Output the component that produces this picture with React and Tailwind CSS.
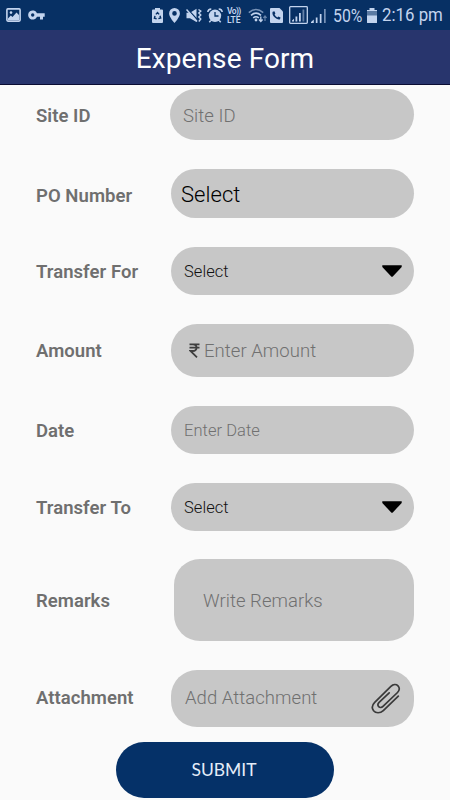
import React from 'react';

const PictureIcon = () => (
  <svg className="w-[15px] h-[14px] shrink-0" viewBox="0 0 15 14" fill="none">
    <rect x="0.9" y="0.9" width="13.2" height="12.2" rx="1" stroke="currentColor" strokeWidth="1.6" />
    <circle cx="5" cy="4.6" r="1.3" fill="currentColor" />
    <path d="M2 10.5L4.8 7.5L6.5 9L10.5 4.5L13 7V12H2Z" fill="currentColor" />
  </svg>
);

const KeyIcon = () => (
  <svg className="w-[17px] h-[10px] shrink-0" viewBox="0 0 17 10">
    <path
      fill="currentColor"
      fillRule="evenodd"
      d="M9 3.3A4.6 4.6 0 1 0 9 6.7H12V9.5H15V6.7H16.7V3.3ZM4.7 3.3A1.7 1.7 0 1 1 4.7 6.7A1.7 1.7 0 0 1 4.7 3.3Z"
    />
  </svg>
);

const BatterySaverIcon = () => (
  <svg className="w-[11px] h-[15px] shrink-0" viewBox="0 0 11 15">
    <path fill="currentColor" d="M3 0H8V1.5H10Q11 1.5 11 2.5V14Q11 15 10 15H1Q0 15 0 14V2.5Q0 1.5 1 1.5H3Z" />
    <path
      d="M3.9 6.4L5.5 4.5L7.1 6.4M8 7.8L8.7 10L6.4 10.7M4.6 10.7L2.4 10.2L3 7.8"
      fill="none"
      stroke="#073064"
      strokeWidth="1.4"
    />
  </svg>
);

const PinIcon = () => (
  <svg className="w-[11px] h-[15px] shrink-0" viewBox="0 0 11 15">
    <path
      fill="currentColor"
      fillRule="evenodd"
      d="M5.5 0A5.4 5.4 0 0 0 0.1 5.4C0.1 9 5.5 15 5.5 15S10.9 9 10.9 5.4A5.4 5.4 0 0 0 5.5 0ZM5.5 3.1A2.3 2.3 0 1 1 5.5 7.7A2.3 2.3 0 0 1 5.5 3.1Z"
    />
  </svg>
);

const VibrateIcon = () => (
  <svg className="w-4 h-[15px] shrink-0" viewBox="0 0 16 15">
    <path fill="currentColor" d="M0.5 4.8H4L10.5 0.8V14L4 10.2H0.5Z" />
    <path d="M1.5 1L12 12.5" stroke="#073064" strokeWidth="1.4" />
    <path d="M0.5 1.5L11 13.5" stroke="currentColor" strokeWidth="1.5" />
    <path d="M12.5 1.5L14.8 3L12.8 5L14.8 7L12.8 9L14.8 11L12.8 13.5" fill="none" stroke="currentColor" strokeWidth="1.4" />
  </svg>
);

const AlarmIcon = () => (
  <svg className="w-4 h-[15px] shrink-0" viewBox="0 0 16 15">
    <circle cx="8" cy="7.8" r="6.2" fill="currentColor" />
    <path
      d="M0.8 4Q1 1 4.3 0.9M15.2 4Q15 1 11.7 0.9M3.8 12.5L2.3 14.3M12.2 12.5L13.7 14.3"
      fill="none"
      stroke="currentColor"
      strokeWidth="1.5"
    />
    <path d="M8 4V8H11.5" fill="none" stroke="#073064" strokeWidth="1.3" />
  </svg>
);

const WifiIcon = () => (
  <svg className="w-5 h-[15px] shrink-0" viewBox="0 0 20 15" fill="none">
    <path d="M0.8 4.6Q8 -1.6 15.2 4.6" stroke="currentColor" strokeWidth="1.5" opacity="0.6" />
    <path d="M3 7.3Q8 3 13 7.3M5.2 9.8Q8 7.6 10.8 9.8" stroke="currentColor" strokeWidth="1.6" />
    <circle cx="8" cy="12" r="1.4" fill="currentColor" />
    <path d="M12.8 8.5V13M11 11.5L12.8 13.5L14.6 11.5" stroke="currentColor" strokeWidth="1.3" />
    <path d="M17 13V8.3M15.4 9.8L17 8L18.6 9.8" stroke="currentColor" strokeWidth="1.2" opacity="0.5" />
  </svg>
);

const CallIcon = () => (
  <svg className="w-[13px] h-[15px] shrink-0" viewBox="0 0 13 15">
    <path fill="currentColor" d="M1 0H9.5L13 3.5V14Q13 15 12 15H1Q0 15 0 14V1Q0 0 1 0Z" />
    <path
      fill="#073064"
      d="M2.7 3.8L4.4 3.3L5.4 5.6L4.6 6.5Q5.4 8.5 7.4 9.4L8.3 8.5L10.5 9.6L10 11.3Q8.8 12 6.6 10.8Q2.6 8.4 2.4 5Z"
    />
  </svg>
);

const SimOneIcon = () => (
  <svg className="w-[19px] h-[18px] shrink-0" viewBox="0 0 19 18">
    <rect x="0.7" y="0.7" width="17.6" height="16.6" rx="0.8" fill="none" stroke="currentColor" strokeWidth="1.3" />
    <path fill="currentColor" d="M3 15.5V14.5L5 12.8V15.5ZM6.5 10.5H8.3V15.5H6.5ZM10 7H11.8V15.5H10Z" />
    <path fill="currentColor" opacity="0.5" d="M13.5 3.5H15.3V15.5H13.5Z" />
  </svg>
);

const SimTwoIcon = () => (
  <svg className="w-4 h-[15px] shrink-0" viewBox="0 0 16 15">
    <path fill="currentColor" d="M0 14L2.8 11.5V15H0ZM4.8 9.5H6.5V15H4.8ZM8.8 6H10.5V15H8.8Z" />
    <path fill="currentColor" opacity="0.6" d="M13 1H14.7V15H13Z" />
  </svg>
);

const BatteryIcon = () => (
  <svg className="w-[10px] h-[15px] shrink-0" viewBox="0 0 10 15">
    <path fill="currentColor" opacity="0.45" d="M0 2H10V8H0Z" />
    <path fill="currentColor" d="M2.5 0H7.5V2H10V3H0V2H2.5ZM0 7.5H10V14.5Q10 15 9.5 15H0.5Q0 15 0 14.5Z" />
  </svg>
);

const CaretIcon = () => (
  <svg className="w-5 h-3 mb-[3px]" viewBox="0 0 20 12">
    <path d="M0.3 0.3H19.7V2L10.8 11.4Q10 12.2 9.2 11.4L0.3 2Z" fill="#000" />
  </svg>
);

const RupeeIcon = () => (
  <svg className="w-[11px] h-[15px] shrink-0 mb-1" viewBox="0 0 11 15" fill="none" stroke="#3f3f3f" strokeWidth="1.8">
    <path d="M0.5 1.3H10.5M0.5 4.7H10.5M1 1.3H4Q7.6 1.5 7.6 4.7Q7.4 8 3.8 8H1.5L8 14.3" />
  </svg>
);

const ClipIcon = () => (
  <svg className="w-[30px] h-[31px]" viewBox="0 0 30 31" fill="none" stroke="#3a3a3a" strokeWidth="1.7" strokeLinecap="round">
    <path d="M27.3 13.2L12.3 27.6C9.2 30.5 4.6 30.3 2.6 27.8C0.7 25.2 1.1 21.9 3.7 19.3L19.9 3.4C22.2 1.2 25.2 1 27 2.8C28.8 4.6 28.7 7.3 26.5 9.5L12 23.4C10.6 24.8 8.8 24.8 7.7 23.6C6.6 22.4 6.7 20.8 8.1 19.4L18.2 9.8" />
  </svg>
);

const StatusBar = () => (
  <div className="h-[30px] bg-[#073064] text-[#c3d4ee] flex items-center pl-1.5 pr-2">
    <PictureIcon />
    <div className="ml-[7px] flex"><KeyIcon /></div>
    <div className="ml-[107px] flex items-center">
      <BatterySaverIcon />
      <div className="ml-[6px]"><PinIcon /></div>
      <div className="ml-[6px]"><VibrateIcon /></div>
      <div className="ml-[5px]"><AlarmIcon /></div>
      <div className="ml-1 w-[16px] text-[8.5px] leading-[10px] font-semibold whitespace-nowrap">
        <div className="tracking-[-0.6px]">Vo))</div>
        <div className="mt-[-1px]">LTE</div>
      </div>
      <div className="ml-[5px]"><WifiIcon /></div>
      <div className="ml-[2px]"><CallIcon /></div>
      <div className="ml-[6px]"><SimOneIcon /></div>
      <div className="ml-[3px]"><SimTwoIcon /></div>
    </div>
    <span className="ml-[6px] w-[31px] text-[18px] whitespace-nowrap"><span className="inline-block origin-left scale-x-[0.88]">50%</span></span>
    <div className="ml-[3px]"><BatteryIcon /></div>
    <span className="ml-[5px] w-[62px] pt-px text-[18.5px] whitespace-nowrap"><span className="inline-block origin-left scale-x-[0.91]">2:16 pm</span></span>
  </div>
);

const Row = ({ label, className, labelClass = 'pt-[3px]', children }) => (
  <div className={`flex items-center justify-between pl-9 pr-9 ${className}`}>
    <span className={`text-[18.5px] font-semibold text-[#6f6f6f] tracking-[0.05px] whitespace-nowrap ${labelClass}`}>{label}</span>
    {children}
  </div>
);

const Field = ({ className, children }) => (
  <div className={`flex items-center rounded-[26px] bg-[#c7c7c7] h-full font-[340] tracking-[0.05px] whitespace-nowrap ${className}`}>
    {children}
  </div>
);

const App = () => {
  return (
    <div className="w-[450px] h-[800px] overflow-hidden bg-[#fafafa] font-[Roboto,sans-serif]">
      <StatusBar />
      <header className="h-[55px] bg-[#28356d] border-b border-[#0a0d33] flex items-center justify-center">
        <h1 className="text-[28px] text-white tracking-[0.1px] pt-[3px]">Expense Form</h1>
      </header>

      <form className="flex flex-col">
        <Row label="Site ID" className="mt-1 h-[51px]" labelClass="pt-1">
          <Field className="w-[244px] pl-[13px] pt-[4px] text-[18.5px] text-[#707070]">Site ID</Field>
        </Row>
        <Row label="PO Number" className="mt-[29px] h-[49px]" labelClass="pt-[6px]">
          <Field className="w-[243px] pl-[10px] pt-[2px] text-[22px] text-black">Select</Field>
        </Row>
        <Row label="Transfer For" className="mt-[29px] h-12">
          <Field className="w-[243px] pl-[13px] pr-3 pt-[2px] justify-between text-[16.5px] text-[#111]">
            Select
            <CaretIcon />
          </Field>
        </Row>
        <Row label="Amount" className="mt-[29px] h-[53px]">
          <Field className="w-[243px] pl-[18px] gap-1 pt-[3px] text-[18.5px] text-[#707070]">
            <RupeeIcon />
            Enter Amount
          </Field>
        </Row>
        <Row label="Date" className="mt-[29px] h-12">
          <Field className="w-[243px] pl-[13px] pt-[2px] text-[16.5px] text-[#707070]">Enter Date</Field>
        </Row>
        <Row label="Transfer To" className="mt-[29px] h-12">
          <Field className="w-[243px] pl-[13px] pr-3 pt-[2px] justify-between text-[16.5px] text-[#111]">
            Select
            <CaretIcon />
          </Field>
        </Row>
        <Row label="Remarks" className="mt-7 h-[82px]">
          <Field className="w-[240px] pl-[29px] pt-[4px] text-[18.5px] text-[#707070]">Write Remarks</Field>
        </Row>
        <Row label="Attachment" className="mt-[29px] h-[57px]" labelClass="">
          <Field className="w-[243px] pl-[14px] pr-[13px] justify-between text-[18.5px] text-[#707070]">
            Add Attachment
            <ClipIcon />
          </Field>
        </Row>
        <button
          type="button"
          className="mt-[15px] ml-[116px] w-[218px] h-14 rounded-[28px] bg-[#053168] pr-[2px] text-[17.5px] text-[#e4ecf8] font-[Lato,sans-serif]"
        >
          SUBMIT
        </button>
      </form>
    </div>
  );
};

export default App;
